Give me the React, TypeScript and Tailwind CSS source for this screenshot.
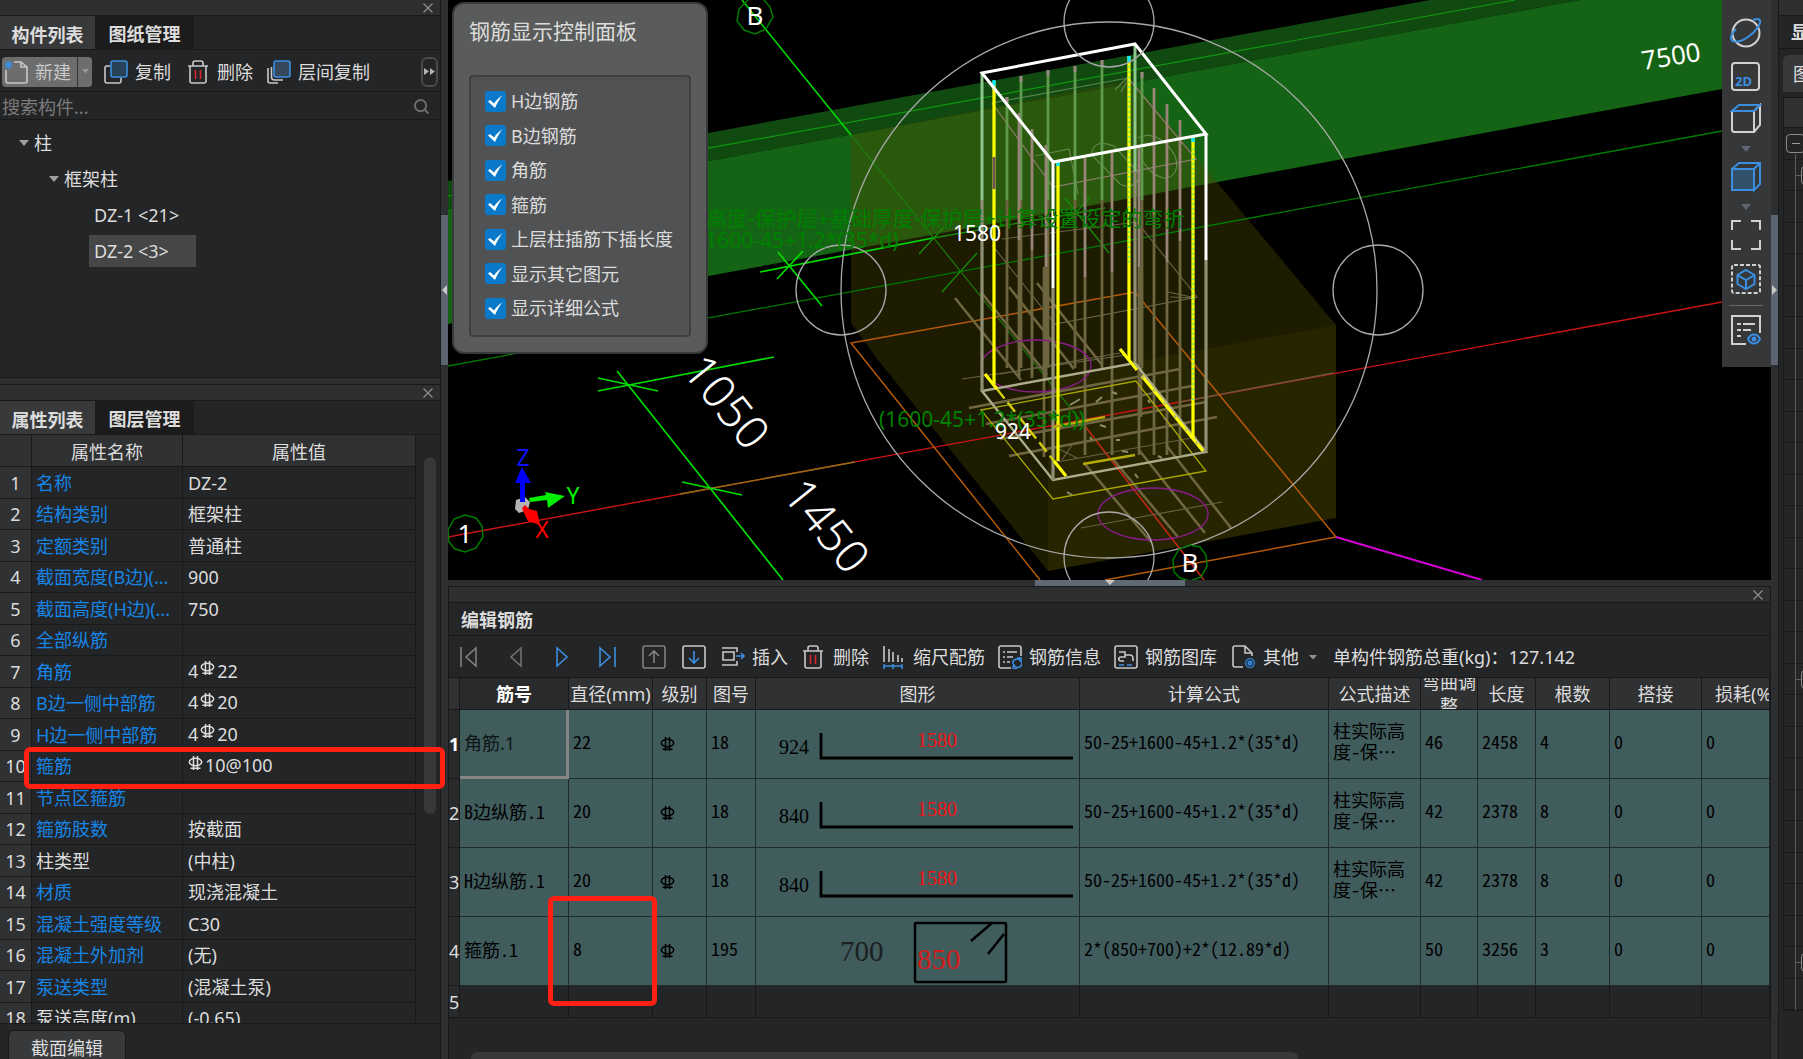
import type { ReactNode } from "react";

const properties: { name: string; value: string; plain?: boolean }[] = [
  { name: "名称", value: "DZ-2" },
  { name: "结构类别", value: "框架柱" },
  { name: "定额类别", value: "普通柱" },
  { name: "截面宽度(B边)(...", value: "900" },
  { name: "截面高度(H边)(...", value: "750" },
  { name: "全部纵筋", value: "" },
  { name: "角筋", value: "4#22" },
  { name: "B边一侧中部筋", value: "4#20" },
  { name: "H边一侧中部筋", value: "4#20" },
  { name: "箍筋", value: "#10@100" },
  { name: "节点区箍筋", value: "" },
  { name: "箍筋肢数", value: "按截面" },
  { name: "柱类型", value: "(中柱)", plain: true },
  { name: "材质", value: "现浇混凝土" },
  { name: "混凝土强度等级", value: "C30" },
  { name: "混凝土外加剂", value: "(无)" },
  { name: "泵送类型", value: "(混凝土泵)" },
  { name: "泵送高度(m)", value: "(-0.65)", plain: true },
];

const displayOptions = ["H边钢筋", "B边钢筋", "角筋", "箍筋", "上层柱插筋下插长度", "显示其它图元", "显示详细公式"];

const rebars = [
  { name: "角筋.1", dia: "22", shape: "18", hook: "924", formula: "50-25+1600-45+1.2*(35*d)", desc: "柱实际高度-保…", bend: "46", length: "2458", count: "4" },
  { name: "B边纵筋.1", dia: "20", shape: "18", hook: "840", formula: "50-25+1600-45+1.2*(35*d)", desc: "柱实际高度-保…", bend: "42", length: "2378", count: "8" },
  { name: "H边纵筋.1", dia: "20", shape: "18", hook: "840", formula: "50-25+1600-45+1.2*(35*d)", desc: "柱实际高度-保…", bend: "42", length: "2378", count: "8" },
  { name: "箍筋.1", dia: "8", shape: "195", hook: "", formula: "2*(850+700)+2*(12.89*d)", desc: "", bend: "50", length: "3256", count: "3" },
];

const rebarColumns = ["筋号", "直径(mm)", "级别", "图号", "图形", "计算公式", "公式描述", "弯曲调整", "长度", "根数", "搭接", "损耗(%)"];

export default function App() {
  return (
    <div className="flex h-screen overflow-hidden bg-[#2d2e30] font-['Noto_Sans','Noto_Sans_CJK_SC',sans-serif] text-[18px] leading-6 text-[#dcdcdc]">
      <aside className="relative flex w-[441px] shrink-0 flex-col border-r border-[#18191a]">
        <ComponentPanel />
        <PropertyPanel />
        <div className="pointer-events-none absolute top-[747px] left-6 h-[42px] w-[421px] rounded-md border-[5px] border-[#ff2012]" />
      </aside>
      <Splitter side="left" />
      <main className="flex min-w-0 flex-1 flex-col">
        <Viewport />
        <div className="flex h-[6px] shrink-0 justify-center">
          <div className="flex w-[150px] justify-center bg-[#5f6a75]">
            <svg className="h-[5px] w-[10px]" viewBox="0 0 10 5" fill="#c8c8c8">
              <path d="M0 0h10L5 5z" />
            </svg>
          </div>
        </div>
        <RebarPanel />
      </main>
      <Splitter side="right" />
      <RightPanel />
    </div>
  );
}

function Splitter({ side }: { side: "left" | "right" }) {
  return (
    <div className="w-[7px] shrink-0 pt-[215px]">
      <div className="flex h-[150px] items-center justify-center bg-[#5b6470]">
        <svg className="h-[10px] w-[5px]" viewBox="0 0 5 10" fill="#c8c8c8">
          <path d={side === "left" ? "M5 0v10L0 5z" : "M0 0v10L5 5z"} />
        </svg>
      </div>
    </div>
  );
}

function TitleBar() {
  return (
    <div className="flex h-4 shrink-0 items-center justify-end border-b border-[#18191a] bg-[#2d2e30] pr-[7px]">
      <button aria-label="关闭">
        <svg className="h-[10px] w-[10px]" viewBox="0 0 10 10" stroke="#8c8c8c" strokeWidth="1.3">
          <path d="M0.5 0.5l9 9M9.5 0.5l-9 9" />
        </svg>
      </button>
    </div>
  );
}

function Tabs({ labels }: { labels: string[] }) {
  return (
    <div className="flex h-[34px] shrink-0 border-b border-[#18191a] font-bold">
      <button className="w-[95px] bg-[#37393b] pt-1">{labels[0]}</button>
      <button className="w-[99px] bg-[#1c1c1d] pt-[2px]">{labels[1]}</button>
    </div>
  );
}

function ComponentPanel() {
  return (
    <section className="flex h-[378px] shrink-0 flex-col border-b border-[#18191a] bg-[#242527]">
      <TitleBar />
      <Tabs labels={["构件列表", "图纸管理"]} />
      <div className="flex h-[42px] shrink-0 items-center border-b border-[#18191a] pt-[2px] pl-[2px]">
        <div className="flex h-[30px] rounded bg-[#6d6d6d]">
          <button className="flex w-[76px] items-center gap-[7px] border-r border-[#333] pl-[2px] text-[#c8c8c8]">
            <NewIcon />
            新建
          </button>
          <button className="flex w-[14px] items-center justify-center" aria-label="新建选项">
            <Caret className="w-[7px] text-[#9a9a9a]" />
          </button>
        </div>
        <button className="ml-3 flex items-center gap-[7px]">
          <CopyIcon />
          复制
        </button>
        <button className="ml-[15px] flex items-center gap-[7px]">
          <TrashIcon />
          删除
        </button>
        <button className="ml-[14px] flex items-center gap-[7px]">
          <LayerCopyIcon />
          层间复制
        </button>
        <button className="mr-[2px] ml-auto flex h-[30px] w-[17px] items-center justify-center rounded-md border-2 border-[#4a4a4b]" aria-label="更多">
          <svg className="h-[7px] w-[11px]" viewBox="0 0 11 7" fill="#b4b4b4">
            <path d="M0 0l5 3.5L0 7zM6 0l5 3.5L6 7z" />
          </svg>
        </button>
      </div>
      <label className="flex h-[28px] shrink-0 items-center border-b border-[#18191a] pt-[2px] pr-[11px] pl-[2px]">
        <input type="text" aria-label="搜索构件" placeholder="搜索构件..." className="min-w-0 flex-1 bg-transparent outline-none placeholder:text-[#7b7b7b]" />
        <svg className="h-[15px] w-[15px]" viewBox="0 0 16 16" fill="none" stroke="#6f6f6f" strokeWidth="2">
          <circle cx="7" cy="7" r="6" />
          <path d="M11.5 11.5l4 4" />
        </svg>
      </label>
      <ul className="pt-[5px] leading-9">
        <li>
          <div className="flex items-center gap-[5px] pl-[19px]">
            <Caret className="w-[10px] text-[#a0a0a0]" />柱
          </div>
          <ul>
            <li>
              <div className="flex items-center gap-[5px] pl-[49px]">
                <Caret className="w-[10px] text-[#a0a0a0]" />
                框架柱
              </div>
              <ul className="pl-[89px]">
                <li className="pl-[5px]">DZ-1 &lt;21&gt;</li>
                <li className="mt-[2px] h-8 w-[107px] bg-[#464646] pl-[5px] leading-8">DZ-2 &lt;3&gt;</li>
              </ul>
            </li>
          </ul>
        </li>
      </ul>
    </section>
  );
}

function PropertyPanel() {
  return (
    <section className="mt-[6px] flex min-h-0 flex-1 flex-col border-t border-[#18191a] bg-[#242527]">
      <TitleBar />
      <Tabs labels={["属性列表", "图层管理"]} />
      <div className="flex min-h-0 flex-1 overflow-hidden border-b border-[#18191a]">
        <div className="min-w-0 flex-1">
          <table className="w-full table-fixed border-separate border-spacing-0 text-left">
            <colgroup>
              <col className="w-8" />
              <col className="w-[151px]" />
              <col />
            </colgroup>
            <thead>
              <tr className="h-8 bg-[#303133]">
                <th className="border-r border-b border-[#18191a]" />
                <th className="border-r border-b border-[#18191a] pt-[2px] text-center font-normal">属性名称</th>
                <th className="border-r border-b border-[#18191a] pt-[2px] text-center font-normal">属性值</th>
              </tr>
            </thead>
            <tbody>
              {properties.map((p, i) => (
                <tr key={p.name} className="odd:h-8 even:h-[31px]">
                  <td className="border-r border-b border-[#18191a] bg-[#303133] text-center">{i + 1}</td>
                  <td className={`truncate border-r border-b border-[#18191a] pl-1 ${p.plain ? "" : "text-[#1685e6]"}`}>{p.name}</td>
                  <td className="border-r border-b border-[#18191a] pl-[5px]">
                    <PropertyValue text={p.value} />
                  </td>
                </tr>
              ))}
            </tbody>
          </table>
        </div>
        <div className="w-6 shrink-0 pt-[22px] pl-2">
          <div className="h-[357px] w-3 rounded-full bg-[#37383a]" />
        </div>
      </div>
      <div className="h-[35px] shrink-0 pt-[6px] pl-2">
        <button className="h-[36px] w-[118px] rounded-t-md border border-[#18191a] bg-[#37393b]">截面编辑</button>
      </div>
    </section>
  );
}

// "#" stands for the grade III bar mark
function PropertyValue({ text }: { text: string }) {
  const [before, after] = text.split("#");
  if (after === undefined) return <>{text}</>;
  return (
    <span className="flex items-center gap-[2px] pb-[2px]">
      {before}
      <GradeMark className="mb-[5px]" />
      {after}
    </span>
  );
}

function GradeMark({ className = "" }: { className?: string }) {
  return (
    <svg className={`h-4 w-[15px] shrink-0 ${className}`} viewBox="0 0 15 16" fill="none" stroke="currentColor" strokeWidth="1.5">
      <ellipse cx="7.5" cy="7" rx="6.2" ry="3.8" />
      <path d="M5.5 1v14M9.5 1v14M2.5 13.2h10" />
    </svg>
  );
}

function Viewport() {
  return (
    <section className="relative min-h-0 flex-1 overflow-hidden bg-black">
      <Scene />
      <div className="absolute top-[2px] left-1 w-[256px] rounded-xl border-2 border-[#38393b] bg-[#5a5c5b] px-[15px] pb-[15px]">
        <h2 className="pt-[11px] text-[21px] leading-8">钢筋显示控制面板</h2>
        <div className="mt-[28px] flex h-[262px] flex-col justify-between rounded border-2 border-[#3f4042] bg-[#515254] pt-3 pb-[15px] pl-[14px]">
          {displayOptions.map((label) => (
            <label key={label} className="flex items-center gap-[5px]">
              <span className="relative h-[21px] w-[21px]">
                <input type="checkbox" defaultChecked className="block h-full w-full appearance-none rounded-[3px] bg-[#0a79ca]" />
                <svg className="pointer-events-none absolute inset-0" viewBox="0 0 21 21" fill="#fff">
                  <path d="M3 10.5l2-1.5 4 3.5c2-3 4.5-5.500 8.5-8.500-3 4-5.5 8-7.5 13z" />
                </svg>
              </span>
              {label}
            </label>
          ))}
        </div>
      </div>
      <ViewToolbar />
    </section>
  );
}

const rearBars = [[1007, 97], [1021, 76], [1048, 70], [1075, 66], [1102, 60], [1142, 72]];
const nearBars = [[1019, 113, 240], [1032, 129, 250], [1046, 145, 267], [1154, 88, 215], [1167, 104, 262], [1180, 120, 241], [1085, 158, 277], [1112, 153, 272], [1139, 148, 267]];

function Scene() {
  return (
    <svg className="block h-full w-full" viewBox="448 0 1323 580" preserveAspectRatio="xMidYMid slice" fill="none">
      {/* beam */}
      <path d="M448 181L1430 0h150L448 209z" fill="#114a10" />
      <path d="M448 209L1580 0h191v80L448 324z" fill="#156415" />
      <path d="M448 196L1515 0" stroke="#129612" strokeWidth="1.2" />

      {/* footing */}
      <path d="M851 135l281-55 204 245v193l-288 53-170-211-27-37z" fill="#4c4600" fillOpacity="0.4" />
      <path d="M1048 378l288-53v193l-288 53z" fill="#4c4600" fillOpacity="0.2" />

      {/* axes and dimension lines */}
      <path d="M448 366L1722 131" stroke="#007a00" strokeWidth="1.3" />
      <path d="M742 0l109 135" stroke="#00d800" strokeWidth="1.6" />
      <path d="M851 135l233 290" stroke="#1c7c0c" strokeWidth="1.2" />
      <path d="M448 537L1722 302" stroke="#c81414" strokeWidth="1.4" />
      <path d="M680 494L855 462" stroke="#8c7010" strokeWidth="1.4" />
      <path d="M1180 402l153-29" stroke="#6a5638" strokeWidth="1.4" />
      <path d="M760 272l173-34" stroke="#00dc00" strokeWidth="1.7" />
      <path d="M933 238l172-30M943 228l-24 26M977 253l-35 39M1065 198l44 55M1090 197l-25 28" stroke="#178c0a" strokeWidth="1.3" />
      <path d="M778 252l44 54M803 251l-26 28M617 371l166 209M598 391l176-34M598 378l60 13M682 482l60 13" stroke="#00dc00" strokeWidth="1.7" />

      {/* footing outline */}
      <path d="M1040 580L851 343l284-51 201 245-231 43" stroke="#b45a08" strokeWidth="1.5" />
      <path d="M1336 537l146 43" stroke="#d400d4" strokeWidth="2" />
      <path d="M1084 425l120 155" stroke="#c82814" strokeWidth="1.5" />

      {/* bent feet */}
      <g stroke="#6f653f" strokeWidth="2.6">
        <path d="M955 298l66 82M981 292l66 83M1009 287l65 82M1037 283l65 82" />
        <path d="M1084 463l67 79M1112 458l66 79M1139 450l66 83M1166 445l65 83" />
        <path d="M969 408l211-39M986 424l206-38M1000 439l206-37M1009 456l208-39" />
      </g>
      <g stroke="#686046" strokeWidth="1.2">
        <path d="M962 379l164-24M1000 374l120-21M1081 528l141-26M1057 462l140-25M1002 239l135-17M1137 222l60 75-142 27-63-79" />
        <path d="M1168 292l28 6-26-1M1057 448l20 10M1062 460l10-15" />
      </g>
      <g stroke="#7c9866" strokeWidth="1.2">
        <path d="M992 103l136-25M1115 90l14-14M1121 92l8-14M1035 156l34-7 9 45M1092 155c0-14 12-13 22-9l24 26c4 10-8 18-18 12zM1138 138c10-6 22-1 30 8 14 15 10 32-4 32-12-2-20-14-26-24" opacity="0.7" />
      </g>
      <path d="M1128 78l68 81-143 28-61-84" stroke="#8c7c6c" strokeWidth="1.2" />

      <g strokeWidth="2.8">
        {rearBars.map(([x, top]) => (
          <g key={x}>
            <path d={`M${x} ${top}V200`} stroke="#5f9a4f" />
            <path d={`M${x} 200V368`} stroke="#6b643e" />
            <path d={`M${x} ${top}v6`} stroke="#9c8484" />
          </g>
        ))}
        {nearBars.map(([x, top, change]) => (
          <g key={x}>
            <path d={`M${x} ${top}V${change}`} stroke="#988478" />
            <path d={`M${x} ${change}V${x > 1060 ? 455 : 378}`} stroke="#6f6742" />
          </g>
        ))}
        <path d="M1044 267v190M1141 267v150" stroke="#6b643e" />
      </g>

      <ellipse cx="1036" cy="366" rx="55" ry="26" stroke="#8c1c8c" strokeWidth="1.3" />
      <ellipse cx="1153" cy="514" rx="55" ry="26" stroke="#8c1c8c" strokeWidth="1.3" />

      {/* base of the column */}
      <path d="M981 410l155-29 70 90-153 28z" stroke="#aaa800" strokeWidth="1.3" />
      <path d="M982 391l153-28 71 89-153 28z" stroke="#acac8c" strokeWidth="2.4" />
      <path d="M1070 405l10-6M1096 402l6-5M1112 392l5 2M1100 425l6 2M1116 440h4M1122 451l6 1M1135 474l3 4M1067 492l5 3M1158 456l4 2M1090 437l2 3M1164 418l3 2M1148 400l2 3" stroke="#8c8c6c" strokeWidth="2" />

      <path d="M982 73v127M1135 44v127" stroke="#8cc88c" strokeWidth="3" />
      <path d="M982 200v191M1135 171v192M1206 260v192M1053 288v192" stroke="#8f8f74" strokeWidth="3.2" />
      <path d="M1053 162v126M1206 134v126" stroke="#fff" strokeWidth="3" />

      {/* corner bars */}
      <path d="M994 81v303M1058 163v298M1129 56v304M1193 137v300" stroke="#ff0" strokeWidth="3.2" />
      <path d="M1129 66v200M1193 148v255" stroke="#3ce8a0" strokeWidth="1.2" strokeDasharray="2 3" />
      <path d="M994 80v6M1058 162v4M1129 56v6M1193 137v5" stroke="#00e8ff" strokeWidth="3.2" />
      <path d="M994 157v32" stroke="#6a5858" strokeWidth="3" />
      <path d="M985 374l12 15M1054 461l12 15M1120 349l17 21M1142 376l61 75" stroke="#ff0" strokeWidth="3.2" />
      <path d="M997 389l57 72" stroke="#d4cc10" strokeWidth="2.4" strokeDasharray="12 5" />
      <path d="M1142 376l61 75" stroke="#acac8c" strokeWidth="1.4" strokeDasharray="3 14" />
      <path d="M1053 427l52-10M1083 464l52-9" stroke="#b4ac08" strokeWidth="2.6" />
      <path d="M982 73l153-29 71 90-153 28z" stroke="#fff" strokeWidth="3" />

      {/* orbit gizmo */}
      <g stroke="#a8a8a8" strokeWidth="1.3">
        <circle cx="1109" cy="290" r="268" />
        <circle cx="841" cy="290" r="45" />
        <circle cx="1378" cy="290" r="45" />
        <circle cx="1109" cy="22" r="45" />
        <circle cx="1109" cy="557" r="45" />
      </g>

      {/* formula notes */}
      <g className="fill-[#008000] text-[21px]">
        <text x="706" y="226">高度-保护层+基础厚度-保护层+计算设置设定的弯折</text>
        <text x="699" y="248">(1600-45+1.2*(35*d)</text>
        <text x="879" y="427">(1600-45+1.2*(35*d))</text>
      </g>
      <g className="fill-white text-[21px]">
        <text x="953" y="241">1580</text>
        <text x="995" y="439">924</text>
      </g>
      <g className="fill-white text-[46px] font-light" textAnchor="middle">
        <text x="714" y="412" transform="rotate(51 714 412)">1050</text>
        <text x="814" y="536" transform="rotate(51 814 536)">1450</text>
      </g>
      <text x="1643" y="70" transform="rotate(-9 1643 70)" className="fill-white text-[26px]">7500</text>

      {/* axis bubbles */}
      <g stroke="#007c00" strokeWidth="1.5">
        <path d="M748 0l-9 9-2 12 7 9 11 4 11-5 7-12-3-10-6-7" />
        <path d="M465 515l-11 4-6 11 1 12 6 7 10 3 11-4 7-11-1-11-6-8z" />
        <path d="M1190 545l-11 4-6 11 1 12 6 6 10 3 11-4 6-11-1-11-6-8z" />
      </g>
      <g className="fill-white text-[26px]" textAnchor="middle">
        <text x="755" y="25">B</text>
        <text x="465" y="543">1</text>
        <text x="1190" y="572">B</text>
      </g>

      {/* view axes */}
      <path d="M516 500l9-3 5 5-2 8-9 3-4-4z" fill="#b4b4b4" />
      <path d="M520 502V483h-5l7-16 9 16h-6v19z" fill="#0000ff" />
      <path d="M530 502l17-2 1 8 17-12-20-4 1 3-17 3z" fill="#00f000" />
      <path d="M522 508l3-3 4 4 8 2 3 14-12-4-4-8z" fill="#ff0000" />
      <g className="text-[23px]" textAnchor="middle">
        <text x="523" y="466" fill="#1010ff">Z</text>
        <text x="573" y="504" fill="#00f000">Y</text>
        <text x="542" y="538" fill="#ff0000">X</text>
      </g>
    </svg>
  );
}

function ViewToolbar() {
  return (
    <div className="absolute top-0 right-0 flex h-[367px] w-[49px] flex-col items-center bg-[#363739] pt-[17px] pr-[2px] text-[#d0d0d0]">
      <ToolButton label="动态观察">
        <circle cx="16" cy="16" r="13.5" />
        <path d="M23 3c5-2 8-1 7 3-2 6-9 13-17 17-7 3-12 2-12-2 0-3 2-6 5-9" stroke="#3b8ee0" />
      </ToolButton>
      <button aria-label="二维" className="mt-[13px] mb-3 flex h-[29px] w-[29px] shrink-0 items-end rounded-sm border-2 border-current pl-[2px] text-[13px] leading-4 font-bold">
        <span className="text-[#3b8ee0]">2D</span>
      </button>
      <ToolButton label="俯视">
        <path d="M2 8h22v21H3.5L2 27.5zM24 8l6-6v20l-6 7" />
        <path d="M2 8l7-6h21l-6 6z" stroke="#3b8ee0" />
      </ToolButton>
      <Caret className="mt-[11px] mb-[9px] w-[10px] text-[#5f6570]" />
      <ToolButton label="实体">
        <path d="M2 8h22v21H2z" fill="#33506b" stroke="#3b8ee0" />
        <path d="M2 8l7-6h21v21l-6 6V8l6-6M24 8H2" stroke="#3b8ee0" />
      </ToolButton>
      <Caret className="mt-[11px] mb-[9px] w-[10px] text-[#5f6570]" />
      <ToolButton label="全屏">
        <path d="M2 11V2h9M21 2h9v9M30 21v9h-9M11 30H2v-9" />
      </ToolButton>
      <div className="h-3" />
      <ToolButton label="局部三维">
        <rect x="2" y="2" width="28" height="28" rx="2" strokeDasharray="4 2" />
        <path d="M16 7l8.5 5v9L16 26l-8.5-5v-9zM7.5 12l8.5 5 8.5-5M16 17v9" stroke="#3b8ee0" />
      </ToolButton>
      <div className="mt-[10px] mb-2 h-px w-[34px] shrink-0 bg-[#68686a]" />
      <ToolButton label="显示设置">
        <path d="M30 19V2H2v28h14M7 10h4M13 10h12M7 16h4M13 16h8M7 22h4" />
        <path d="M18 25c3-6 9-6 12 0-3 6-9 6-12 0z" stroke="#3b8ee0" />
        <circle cx="24" cy="25" r="1.5" fill="#3b8ee0" stroke="#3b8ee0" />
      </ToolButton>
    </div>
  );
}

function ToolButton({ label, children }: { label: string; children: ReactNode }) {
  return (
    <button aria-label={label} className="h-8 w-8 shrink-0">
      <svg viewBox="0 0 32 32" fill="none" stroke="currentColor" strokeWidth="2">
        {children}
      </svg>
    </button>
  );
}

function RebarPanel() {
  return (
    <section className="relative flex h-[473px] shrink-0 flex-col border-x border-t border-[#18191a] bg-[#242527]">
      <TitleBar />
      <h2 className="flex h-[33px] shrink-0 items-center border-b border-[#18191a] pt-[2px] pl-3 font-bold">编辑钢筋</h2>
      <RebarToolbar />
      <div className="overflow-hidden">
        <table className="w-full min-w-[1321px] table-fixed border-separate border-spacing-0 text-left">
          <colgroup>
            <col className="w-[11px]" />
            <col className="w-[109px]" />
            <col className="w-[84px]" />
            <col className="w-[54px]" />
            <col className="w-[49px]" />
            <col className="w-[324px]" />
            <col className="w-[249px]" />
            <col className="w-[92px]" />
            <col className="w-[57px]" />
            <col className="w-[58px]" />
            <col className="w-[74px]" />
            <col className="w-[92px]" />
            <col />
          </colgroup>
          <thead>
            <tr className="bg-[#303133]">
              <th className="border-r border-b border-[#18191a]" />
              {rebarColumns.map((c) => (
                <th key={c} className="border-r border-b border-[#18191a] font-normal">
                  {c === "损耗(%)" ? (
                    <div className="h-[31px] overflow-hidden pt-1 pl-[13px] whitespace-nowrap">{c}</div>
                  ) : (
                    <div className={`flex h-[31px] items-center justify-center overflow-hidden pt-px text-center ${c === "弯曲调整" ? "" : "whitespace-nowrap"} ${c === "筋号" ? "bg-[#292a2c] font-bold text-white" : ""}`}>{c}</div>
                  )}
                </th>
              ))}
            </tr>
          </thead>
          <tbody>
            {rebars.map((r, i) => (
              <tr key={r.name} className="h-[69px] bg-[#405c5d] font-['Noto_Sans_Mono_CJK_SC','Noto_Sans_CJK_SC',monospace] text-black">
                <RowNumber n={i + 1} bold={i === 0} />
                <td className={`border-r border-b pl-1 ${i === 0 ? "border-r-[3px] border-b-[3px] border-[#858585] font-['Noto_Sans','Noto_Sans_CJK_SC',sans-serif] text-[#0c1414]" : "border-[#1e2a2b] pb-1"}`}>{r.name}</td>
                <Cell>{r.dia}</Cell>
                <Cell>
                  <span className="block pt-[6px] pl-[3px]">
                    <GradeMark />
                  </span>
                </Cell>
                <Cell>{r.shape}</Cell>
                <td className="border-r border-b border-[#1e2a2b]">{r.hook ? <LShape hook={r.hook} /> : <StirrupShape />}</td>
                <Cell>{r.formula}</Cell>
                <Cell>
                  <span className="block leading-[21px]">{r.desc}</span>
                </Cell>
                <Cell>{r.bend}</Cell>
                <Cell>{r.length}</Cell>
                <Cell>{r.count}</Cell>
                <Cell>0</Cell>
                <Cell>0</Cell>
              </tr>
            ))}
            <tr className="h-8">
              <RowNumber n={5} />
              {rebarColumns.map((c) => (
                <td key={c} className="border-r border-b border-[#18191a]" />
              ))}
            </tr>
          </tbody>
        </table>
      </div>
      <div className="mt-auto h-[7px] pl-[22px]">
        <div className="h-full w-7/11 rounded-t-md bg-[#37383a]" />
      </div>
      <div className="pointer-events-none absolute top-[309px] left-[99px] h-[110px] w-[109px] rounded-md border-[5px] border-[#ff2012]" />
    </section>
  );
}

function RowNumber({ n, bold }: { n: number; bold?: boolean }) {
  return <td className={`border-r border-b border-[#18191a] bg-[#292a2c] text-center font-['Noto_Sans',sans-serif] ${bold ? "font-bold text-white" : "text-[#dcdcdc]"}`}>{n}</td>;
}

function Cell({ children }: { children: ReactNode }) {
  return <td className="border-r border-b border-[#1e2a2b] pb-[7px] pl-1">{children}</td>;
}

function LShape({ hook }: { hook: string }) {
  return (
    <svg className="block h-[68px] w-[323px] font-['Liberation_Serif',serif] text-[20px]" viewBox="0 0 323 68">
      <text x="23" y="44">{hook}</text>
      <text x="161" y="37" fill="#f01414">1580</text>
      <path d="M65 23v25h252" fill="none" stroke="#000" strokeWidth="2.8" />
    </svg>
  );
}

function StirrupShape() {
  return (
    <svg className="block h-[68px] w-[323px] font-['Liberation_Serif',serif] text-[29px]" viewBox="0 0 323 68">
      <text x="84" y="44" fill="#1c2020">700</text>
      <text x="161" y="52" fill="#d01c1c">850</text>
      <rect x="159" y="6" width="91" height="59" rx="1" fill="none" stroke="#000" strokeWidth="2.5" />
      <path d="M215 24l21-18M232 37l16-20" stroke="#000" strokeWidth="2.5" />
    </svg>
  );
}

function RebarToolbar() {
  return (
    <div className="flex h-[42px] shrink-0 items-center border-b border-[#18191a] pt-px whitespace-nowrap">
      <NavButton label="首条" className="mr-1 w-10 text-[#808080]">
        <path d="M4 2v20M19 3v18L9 12z" />
      </NavButton>
      <NavButton label="上一条" className="w-[46px] text-[#707070]">
        <path d="M17 3v18L7 12z" />
      </NavButton>
      <NavButton label="下一条" className="w-[46px] text-[#3b8ee0]">
        <path d="M7 3v18l10-9z" />
      </NavButton>
      <NavButton label="末条" className="w-[46px] text-[#3b8ee0]">
        <path d="M4 3v18l10-9zM19 2v20" />
      </NavButton>
      <NavButton label="上移" className="w-[46px] text-[#808080]">
        <rect x="1" y="1" width="22" height="22" rx="2" />
        <path d="M12 18V6M7 11l5-5 5 5" />
      </NavButton>
      <NavButton label="下移" className="w-[34px] text-[#c8c8c8]">
        <rect x="1" y="1" width="22" height="22" rx="2" />
        <path d="M12 6v12M7 13l5 5 5-5" stroke="#3b8ee0" />
      </NavButton>
      <div className="ml-[10px] flex items-center gap-[13px]">
        <button className="flex items-center gap-[7px]">
          <Icon>
            <path d="M1 3h15v4M1 20h15v-4M2 7h11v8H2z" />
            <path d="M15 11h8M20 8l3 3-3 3" stroke="#3b8ee0" />
          </Icon>
          插入
        </button>
        <button className="flex items-center gap-2">
          <TrashIcon />
          删除
        </button>
        <button className="flex items-center gap-[7px]">
          <Icon>
            <path d="M2 1v16M7 4v13M11 7v10M16 10v7M20 13v4" />
            <path d="M2 21h18M2 19v5M11 19v5M20 19v5" stroke="#3b8ee0" />
          </Icon>
          缩尺配筋
        </button>
        <button className="flex items-center gap-[7px]">
          <Icon>
            <path d="M23 11V3a2 2 0 00-2-2H3a2 2 0 00-2 2v18a2 2 0 002 2h10M5 7h2M9 7h10M5 12h2M9 12h6M5 17h2M9 17h3" />
            <path d="M15 19c-1-5 6-7 8-2M24 17c0 6-6 7-8 3M19 13l4 0v4M19 24l-4-1 1-4" stroke="#3b8ee0" />
          </Icon>
          钢筋信息
        </button>
        <button className="flex items-center gap-[7px]">
          <Icon>
            <rect x="1" y="1" width="22" height="22" rx="2" />
            <path d="M5 7h6v5H7c-3 0-3 4 0 4h3M11 10h5c3 0 3 2 3 6" />
            <path d="M5 20h5M13 20h5" stroke="#3b8ee0" />
          </Icon>
          钢筋图库
        </button>
        <button className="ml-[2px] flex items-center gap-[7px]">
          <Icon>
            <path d="M11 22H3a2 2 0 01-2-2V3a2 2 0 012-2h10l7 7v3M13 1v7h7" />
            <circle cx="18" cy="18" r="4.5" fill="#1f4468" stroke="#2f6fae" />
            <circle cx="18" cy="18" r="1.5" stroke="#3b8ee0" />
          </Icon>
          其他
          <Caret className="mx-[3px] w-2 text-[#909090]" />
        </button>
        <span>单构件钢筋总重(kg)：127.142</span>
      </div>
    </div>
  );
}

function NavButton({ label, className, children }: { label: string; className: string; children: ReactNode }) {
  return (
    <button aria-label={label} className={`flex shrink-0 justify-center ${className}`}>
      <svg className="h-6 w-6" viewBox="0 0 24 24" fill="none" stroke="currentColor" strokeWidth="1.6">
        {children}
      </svg>
    </button>
  );
}

function RightPanel() {
  return (
    <aside className="w-[25px] shrink-0 overflow-hidden border-l border-[#18191a] bg-[#242527]">
      <div className="h-4 border-b border-[#18191a] bg-[#2d2e30]" />
      <div className="h-[33px] overflow-hidden border-b border-[#18191a] pt-1 pl-3 font-bold whitespace-nowrap">显</div>
      <button className="mt-[6px] ml-1 block h-[37px] w-[60px] rounded-tl-md bg-[#37393b] pl-[10px] text-left">图</button>
      <div className="ml-1 border-l border-[#18191a]">
        <div className="mt-[5px] h-[31px] border-y border-[#18191a] bg-[#303133]" />
        <div className="relative border-b border-[#18191a]">
          {Array.from({ length: 28 }, (_, i) => (
            <div key={i} className="flex items-center border-b border-[#18191a] odd:h-8 even:h-[31px]">
              {i === 0 && <TreeToggle className="z-10 ml-[2px]" />}
              {[1, 17, 26].includes(i) && (
                <>
                  <div className="ml-3 h-px w-[5px] shrink-0 bg-[#5c5c5c]" />
                  <TreeToggle />
                </>
              )}
            </div>
          ))}
          <div className="absolute top-[26px] bottom-0 left-[11px] w-px bg-[#5c5c5c]" />
        </div>
      </div>
    </aside>
  );
}

function TreeToggle({ className = "" }: { className?: string }) {
  return (
    <button aria-label="折叠" className={`flex h-[19px] w-[19px] shrink-0 items-center justify-center rounded-sm border border-[#8a8a8a] ${className}`}>
      <span className="h-px w-2 bg-[#a0a0a0]" />
    </button>
  );
}

function Caret({ className }: { className: string }) {
  return (
    <svg className={`shrink-0 ${className}`} viewBox="0 0 10 6" fill="currentColor">
      <path d="M0 0h10L5 6z" />
    </svg>
  );
}

function Icon({ children }: { children: ReactNode }) {
  return (
    <svg className="h-6 w-6 shrink-0 text-[#c8c8c8]" viewBox="0 0 24 24" fill="none" stroke="currentColor" strokeWidth="1.6">
      {children}
    </svg>
  );
}

function NewIcon() {
  return (
    <Icon>
      <path d="M10 2h7l6 5v14a2 2 0 01-2 2H4a2 2 0 01-2-2V10M17 2v5h6" />
      <path d="M1 2l7 6M8 2L1 8M4.5 1v8M1 5h7" stroke="#3b8ee0" />
    </Icon>
  );
}

function CopyIcon() {
  return (
    <Icon>
      <path d="M6 6H3a2 2 0 00-2 2v13a2 2 0 002 2h12a2 2 0 002-2v-3" />
      <rect x="7" y="1" width="16" height="16" rx="2" fill="#2a4258" stroke="#3b8ee0" />
    </Icon>
  );
}

function LayerCopyIcon() {
  return (
    <Icon>
      <path d="M1 8v13a2 2 0 002 2h8M4.5 7v10a3 3 0 003 3H16" />
      <rect x="7" y="1" width="16" height="16" rx="2" fill="#37475c" stroke="#3b8ee0" />
    </Icon>
  );
}

function TrashIcon() {
  return (
    <Icon>
      <path d="M2 6h20M7 6V3a2 2 0 012-2h6a2 2 0 012 2v3M4 6v15a2 2 0 002 2h12a2 2 0 002-2V6" />
      <path d="M9.5 10v9M14.5 10v9" stroke="#d8262c" />
    </Icon>
  );
}
